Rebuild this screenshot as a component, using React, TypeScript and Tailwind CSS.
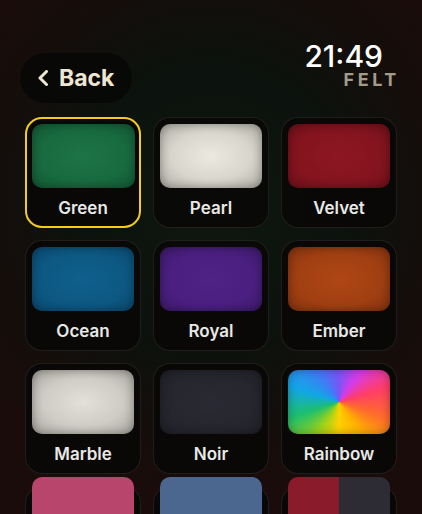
import React from "react";

type Felt = {
  name: string;
  swatch: string;
};

const felts: Felt[] = [
  { name: "Green", swatch: "bg-[radial-gradient(ellipse_at_center,#1d7446_0%,#186a3f_60%,#135a35_100%)]" },
  { name: "Pearl", swatch: "bg-[radial-gradient(ellipse_at_center,#ece9e1_0%,#d8d5cc_55%,#aeaba3_100%)]" },
  { name: "Velvet", swatch: "bg-[radial-gradient(ellipse_at_center,#8d1722_0%,#84141f_60%,#70101a_100%)]" },
  { name: "Ocean", swatch: "bg-[radial-gradient(ellipse_at_center,#0f5f8c_0%,#0d5883_60%,#0a4a70_100%)]" },
  { name: "Royal", swatch: "bg-[radial-gradient(ellipse_at_center,#4f2286_0%,#4a1f80_60%,#3e1a6c_100%)]" },
  { name: "Ember", swatch: "bg-[radial-gradient(ellipse_at_center,#b04614_0%,#a03f12_60%,#86340f_100%)]" },
  { name: "Marble", swatch: "bg-[radial-gradient(ellipse_at_center,#e2e0d9_0%,#cfccc5_55%,#a6a49d_100%)]" },
  { name: "Noir", swatch: "bg-[radial-gradient(ellipse_at_center,#2a2a34_0%,#26262f_60%,#202028_100%)]" },
  {
    name: "Rainbow",
    swatch:
      "bg-[conic-gradient(from_0deg,#7a55f5,#d63ce8,#ff3d6a,#ff6a2c,#ffb300,#ffd200,#9ad21c,#1dbf6e,#12a6e6,#3f7cf5,#7a55f5)]",
  },
];

const partial = [
  { name: "Rose", swatch: "bg-[#b8456b]" },
  { name: "Slate", swatch: "bg-[#4b6790]" },
  { name: "Split", swatch: "bg-[linear-gradient(90deg,#8a1b2a_0%,#8a1b2a_50%,#2d2c34_50%,#2d2c34_100%)]" },
];

const Card = ({ felt, selected }: { felt: Felt; selected?: boolean }) => (
  <div
    className={
      selected
        ? "flex h-[111px] flex-col rounded-[17px] border-[2.5px] border-[#f3cc1e] bg-[#090807] p-[4.5px]"
        : "flex h-[111px] flex-col rounded-[17px] border border-white/[0.09] bg-[#090807]/90 p-[6px]"
    }
  >
    <div
      className={`h-[68px] w-full rounded-[10px] shadow-[inset_0_0_10px_rgba(0,0,0,0.35)] ${felt.swatch}`}
    ></div>
    <div className="flex flex-1 items-center justify-center pt-[8px] text-[17px] font-semibold text-[#e8e8e6]">
      {felt.name}
    </div>
  </div>
);

export default function App() {
  return (
    <div
      className="relative h-[514px] w-[422px] overflow-hidden bg-[radial-gradient(ellipse_70%_60%_at_50%_40%,#0e1710_0%,#0c120d_45%,#160d0b_80%,#1b0c0c_100%)]"
      style={{ fontFamily: "Inter, 'Noto Sans', sans-serif" }}
    >
      {/* Header */}
      <div className="flex items-start justify-between pl-[20px] pr-[25px] pt-[42px]">
        <button className="mt-[11px] flex h-[50px] w-[112px] items-center gap-[10px] rounded-full bg-[#060806]/80 pl-[17px] text-[23px] font-bold text-[#eee6d0]">
          <svg width="12" height="16" viewBox="0 0 12 16" fill="none">
            <path
              d="M9.5 1.5 L3 8 L9.5 14.5"
              stroke="#eee6d0"
              strokeWidth="3"
              strokeLinecap="round"
              strokeLinejoin="round"
            />
          </svg>
          <span className="leading-none">Back</span>
        </button>

        <div className="flex flex-col items-end">
          <span className="mr-[14px] text-[30px] font-medium leading-[28px] text-white">
            21:49
          </span>
          <span className="mr-[-3px] mt-[1px] text-[18px] font-bold leading-[18px] tracking-[0.2em] text-[#a39c8b]">
            FELT
          </span>
        </div>
      </div>

      {/* Felt grid */}
      <div className="mt-[14px] grid grid-cols-3 gap-[12px] px-[25px]">
        {felts.map((f, i) => (
          <Card key={f.name} felt={f} selected={i === 0} />
        ))}
        {partial.map((f) => (
          <div
            key={f.name}
            className="flex h-[111px] flex-col rounded-[17px] border border-white/[0.09] bg-[#090807]/90 p-[6px]"
          >
            <div className={`-mt-[16px] h-[68px] w-full rounded-[10px] ${f.swatch}`}></div>
          </div>
        ))}
      </div>
    </div>
  );
}
